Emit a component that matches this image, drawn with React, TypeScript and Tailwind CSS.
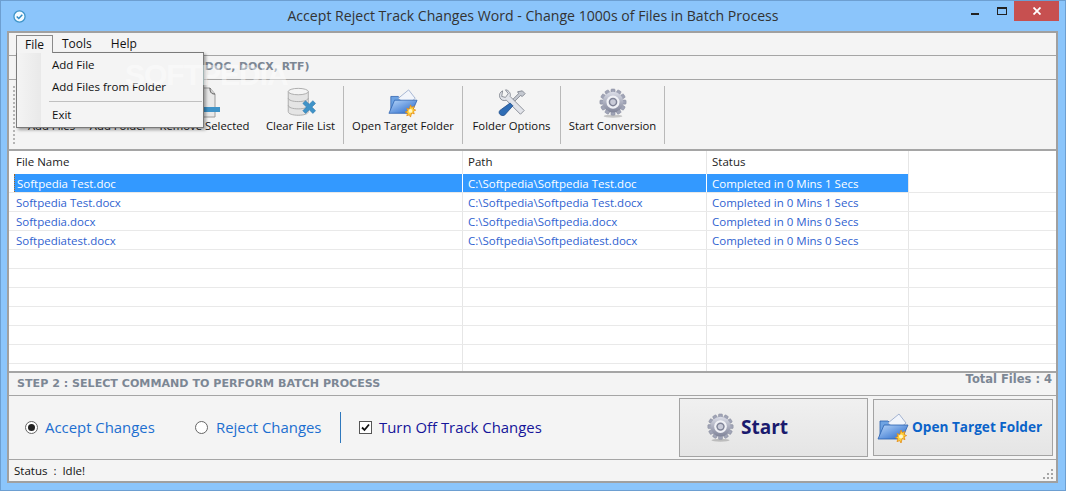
import React from "react";

const ui = "font-['Open_Sans','Noto_Sans',sans-serif]";

const files = [
  ["Softpedia Test.doc", "C:\\Softpedia\\Softpedia Test.doc", "Completed in 0 Mins 1 Secs"],
  ["Softpedia Test.docx", "C:\\Softpedia\\Softpedia Test.docx", "Completed in 0 Mins 1 Secs"],
  ["Softpedia.docx", "C:\\Softpedia\\Softpedia.docx", "Completed in 0 Mins 0 Secs"],
  ["Softpediatest.docx", "C:\\Softpedia\\Softpediatest.docx", "Completed in 0 Mins 0 Secs"],
  ["", "", ""],
  ["", "", ""],
  ["", "", ""],
  ["", "", ""],
  ["", "", ""],
  ["", "", ""],
  ["", "", ""],
];

function Gear({ size = 30 }: { size?: number }) {
  const teeth = Array.from({ length: 12 }, (_, i) => i * 30);
  return (
    <svg width={size} height={size} viewBox="0 0 32 32">
      <defs>
        <linearGradient id="gearFill" x1="0" y1="0" x2="0" y2="1">
          <stop offset="0" stopColor="#dcdee8" />
          <stop offset="1" stopColor="#7f8398" />
        </linearGradient>
      </defs>
      <ellipse cx="16" cy="30" rx="10" ry="1.6" fill="#00000030" />
      {teeth.map((a) => (
        <rect key={a} x="13.800" y="1" width="4.400" height="6" rx="1" fill="#a0a4b6" stroke="#83879a" strokeWidth="0.5" transform={`rotate(${a} 16 15)`} />
      ))}
      <circle cx="16" cy="15" r="11" fill="url(#gearFill)" />
      <circle cx="16" cy="15" r="7" fill="#f0f1f6" />
      <circle cx="16" cy="15" r="4.600" fill="#7e8296" />
      <circle cx="16" cy="15" r="3" fill="#c9cbd8" />
    </svg>
  );
}

function FolderIcon({ size = 30 }: { size?: number }) {
  return (
    <svg width={size} height={size} viewBox="0 0 32 32">
      <defs>
        <linearGradient id="folderFill" x1="0" y1="0" x2="1" y2="1">
          <stop offset="0" stopColor="#b9d7f9" />
          <stop offset="1" stopColor="#1f63c9" />
        </linearGradient>
      </defs>
      <path d="M3 9h8l2 2h3v14H3z" fill="#6ea3e2" stroke="#2a5fae" strokeWidth="0.8" />
      <path d="M11 11 22 2l7 9-9 8z" fill="#f2f5fb" stroke="#8fa3c8" strokeWidth="0.8" />
      <path d="M7 13h24l-6 14H1z" fill="url(#folderFill)" stroke="#2a5fae" strokeWidth="0.8" />
      <path d="M24 18l1.2 2.6 2.8-1-1 2.8 2.6 1.2-2.6 1.2 1 2.8-2.8-1L24 31l-1.2-2.400-2.800 1 1-2.800-2.600-1.200 2.600-1.200-1-2.800 2.800 1z" fill="#ffd23c" stroke="#e58a12" strokeWidth="0.8" />
      <circle cx="24" cy="24.500" r="2" fill="#fff6c8" />
    </svg>
  );
}

function ToolsIcon() {
  return (
    <svg width="30" height="30" viewBox="0 0 32 32">
      <path d="M27 3l3 3-3 3-2-1-7 7-2-2 7-7-1-2z" fill="#c4c8d0" stroke="#6f747f" strokeWidth="0.8" />
      <path d="M6 3a6 6 0 0 0-3 7c1 3 4 4 7 3l15 15 4-4L14 9c1-3-1-6-4-7l-1 0 3 4-3 4-4-1z" fill="#e2e4ea" stroke="#6f747f" strokeWidth="0.8" />
      <path d="M14 16l3 3-9 10c-2 1-4 0-5-1s-1-3 0-4z" fill="#2f6db5" stroke="#1d4a85" strokeWidth="0.8" />
    </svg>
  );
}

function ClearListIcon() {
  return (
    <svg width="30" height="31" viewBox="0 0 32 34">
      <path d="M2 5v22c0 2.500 5 4 11 4s11-1.500 11-4V5z" fill="#e4e4e4" stroke="#a8a8a8" />
      <ellipse cx="13" cy="5" rx="11" ry="3.500" fill="#f4f4f4" stroke="#a8a8a8" />
      <path d="M2 12c0 2.500 5 4 11 4s11-1.500 11-4M2 20c0 2.500 5 4 11 4s11-1.500 11-4" fill="none" stroke="#a8a8a8" />
      <path d="M18 18l3-3 4 4 4-4 3 3-4 4 4 4-3 3-4-4-4 4-3-3 4-4z" fill="#3f93c8" stroke="#2c76a8" strokeWidth="0.6" />
    </svg>
  );
}

function RemoveIcon() {
  return (
    <svg width="30" height="31" viewBox="0 0 30 31">
      <path d="M4 1h16l5 6v23H4z" fill="#e9e9e9" stroke="#9a9a9a" />
      <path d="M20 1c0 4 1 6 5 6" fill="#cfcfcf" stroke="#555" />
      <rect x="3" y="20" width="27" height="5" fill="#3f93c8" />
    </svg>
  );
}

function ToolButton({ label, w, icon, sep = true }: { label: string; w: string; icon?: React.ReactNode; sep?: boolean }) {
  return (
    <>
      <div className={`${w} flex flex-col items-center h-[60px] shrink-0`}>
        <div className="h-[33px] flex items-end justify-center">{icon}</div>
        <div className="text-[11.3px] leading-[16px] text-[#111] whitespace-nowrap">{label}</div>
      </div>
      {sep && <div className="w-px h-[58px] bg-[#b9b9b9] shrink-0" />}
    </>
  );
}

export default function App() {
  return (
    <div className={`${ui} w-[1066px] h-[491px] bg-[#8bc5fb] border border-[#6d9fd1] flex flex-col overflow-hidden relative`}>
      {/* title bar */}
      <div className="h-[30px] shrink-0 flex items-center">
        <div className="w-[120px] h-full flex items-center">
          <svg className="ml-[12px]" width="13" height="13" viewBox="0 0 14 14">
            <circle cx="7" cy="7" r="6" fill="#f4fbff" stroke="#3d94c9" strokeWidth="1.4" />
            <path d="M4 7l2.200 2.200L10 5" fill="none" stroke="#2f8ac4" strokeWidth="1.600" />
          </svg>
        </div>
        <div className="flex-1 text-center text-[14.1px] text-[#333] whitespace-nowrap">
          Accept Reject Track Changes Word - Change 1000s of Files in Batch Process
        </div>
        <div className="w-[120px] flex items-start justify-end self-start">
          <div className="w-[8px] h-[2px] mt-[12px] bg-[#222]" />
          <div className="w-[8px] h-[5px] mt-[6px] ml-[18px] border border-[#222] border-t-2 mr-[7px] box-content" />
          <div className="w-[45px] h-[20px] bg-[#c75050] flex items-center justify-center mr-[6px]">
            <svg width="8" height="8" viewBox="0 0 8 8">
              <path d="M0.500 0.500l7 7M7.500 0.500l-7 7" stroke="#fff" strokeWidth="1.800" />
            </svg>
          </div>
        </div>
      </div>

      {/* client area */}
      <div className="ml-[6px] mr-[7px] h-[452px] border-2 border-[#a0a0a0] bg-[#f4f4f4] flex flex-col relative">
        {/* menu bar */}
        <div className="h-[23px] shrink-0 flex items-center text-[12px] text-[#111] pl-[7px] border-b border-[#a5a5a5]">
          <span className="w-[36px] text-center">File</span>
          <span className="ml-[10px]">Tools</span>
          <span className="ml-[19px]">Help</span>
        </div>

        {/* step 1 */}
        <div className="h-[24px] shrink-0 flex items-center pl-[8px] text-[10.9px] font-bold text-[#7c8794] font-['DejaVu_Sans',sans-serif] border-b border-[#a5a5a5] whitespace-nowrap">
          STEP 1 : SELECT WORD FILES (DOC, DOCX, RTF)
        </div>

        {/* toolbar */}
        <div className="h-[71px] shrink-0 flex items-center pl-[4px] border-b-2 border-[#a5a5a5]">
          <div className="w-[4px] h-[58px] border-l-2 border-dotted border-[#b5b5b5] shrink-0" />
          <ToolButton label="Add Files" w="w-[69px]" sep={false} />
          <ToolButton label="Add Folder" w="w-[65px]" sep={false} />
          <ToolButton label="Remove Selected" w="w-[107px]" icon={<RemoveIcon />} sep={false} />
          <ToolButton label="Clear File List" w="w-[85px]" icon={<ClearListIcon />} />
          <ToolButton label="Open Target Folder" w="w-[118px]" icon={<FolderIcon />} />
          <ToolButton label="Folder Options" w="w-[97px]" icon={<ToolsIcon />} />
          <ToolButton label="Start Conversion" w="w-[103px]" icon={<Gear />} />
        </div>

        {/* table */}
        <div className="h-[220px] shrink-0 bg-white overflow-hidden text-[11.5px]">
          <div className="h-[23px] flex items-start text-[#222] leading-[21px]">
            <div className="w-[453px] pl-[7px]">File Name</div>
            <div className="w-[244px] pl-[5px] border-l border-[#e6e6e6] h-full">Path</div>
            <div className="w-[202px] pl-[5px] border-l border-[#e6e6e6] h-full">Status</div>
            <div className="w-px h-full bg-[#e6e6e6]" />
          </div>
          {files.map((r, i) => (
            <div key={i} className={`h-[19px] flex items-center w-full border-b border-[#e9e9e9] ${i === 0 ? "text-white" : "text-[#2f62d0]"}`}>
              <div className="w-[5px] h-full shrink-0" />
              <div className={`w-[448px] h-full pl-[2px] leading-[20px] ${i === 0 ? "bg-[#3399ff] border-l border-dotted border-[#a8661c]" : ""}`}>{r[0]}</div>
              <div className={`w-[244px] h-full pl-[5px] leading-[20px] border-l ${i === 0 ? "bg-[#3399ff] border-white" : "border-[#e6e6e6]"}`}>{r[1]}</div>
              <div className={`w-[202px] h-full pl-[5px] leading-[20px] border-l ${i === 0 ? "bg-[#3399ff] border-white" : "border-[#e6e6e6]"}`}>{r[2]}</div>
              <div className="w-px h-full bg-[#e6e6e6]" />
            </div>
          ))}
        </div>

        {/* step 2 */}
        <div className="h-[25px] shrink-0 flex items-start justify-between border-t-2 border-b border-[#a5a5a5] pl-[8px] pr-[4px] text-[11.1px] font-bold text-[#7c8794] font-['DejaVu_Sans',sans-serif]">
          <span className="leading-[22px]">STEP 2 : SELECT COMMAND TO PERFORM BATCH PROCESS</span>
          <span className="leading-[13px] text-[11.500px]">Total Files : 4</span>
        </div>

        {/* commands */}
        <div className="h-[64px] shrink-0 flex items-center pl-[16px] border-b border-[#a5a5a5]">
          <span className="w-[13px] h-[13px] rounded-full border border-[#666] bg-white flex items-center justify-center shrink-0">
            <span className="w-[7px] h-[7px] rounded-full bg-[#222]" />
          </span>
          <span className="ml-[7px] w-[150px] text-[14.9px] text-[#1d6fd0]">Accept Changes</span>
          <span className="w-[13px] h-[13px] rounded-full border border-[#666] bg-white shrink-0" />
          <span className="ml-[8px] w-[124px] text-[14.9px] text-[#1d6fd0] whitespace-nowrap">Reject Changes</span>
          <div className="w-px h-[31px] bg-[#2f78bd] shrink-0" />
          <span className="ml-[18px] w-[13px] h-[13px] border border-[#555] bg-white flex items-center justify-center shrink-0">
            <svg width="11" height="11" viewBox="0 0 11 11">
              <path d="M2 5.500l2.500 2.500L9 2.500" fill="none" stroke="#111" strokeWidth="1.800" />
            </svg>
          </span>
          <span className="ml-[7px] w-[300px] text-[14.9px] text-[#15159a] whitespace-nowrap">Turn Off Track Changes</span>
          <button className="w-[189px] h-[59px] shrink-0 border border-[#a3a3a3] bg-gradient-to-b from-[#f0f0f0] to-[#e5e5e5] flex items-center pl-[26px] gap-[6px]">
            <Gear size={29} />
            <span className="text-[19px] font-bold text-[#1a1a6e]">Start</span>
          </button>
          <button className="ml-[5px] w-[180px] h-[57px] shrink-0 border border-[#a3a3a3] bg-gradient-to-b from-[#f0f0f0] to-[#e5e5e5] flex items-center pl-[3px] gap-[3px]">
            <FolderIcon size={32} />
            <span className="text-[13.6px] font-bold text-[#0a63c9] whitespace-nowrap">Open Target Folder</span>
          </button>
        </div>

        {/* status */}
        <div className="h-[21px] shrink-0 flex items-center justify-between pl-[5px] pr-[2px] text-[11.5px] text-[#111]">
          <span className="whitespace-pre">Status  :  Idle!</span>
          <svg className="self-end mb-[2px]" width="11" height="11" viewBox="0 0 11 11">
            <path d="M8 1h2v2H8zM4 5h2v2H4zM8 5h2v2H8zM0 9h2v2H0zM4 9h2v2H4zM8 9h2v2H8z" fill="#a5a5a5" />
          </svg>
        </div>

        {/* open File menu */}
        <div className="absolute left-[7px] top-[2px] w-[37px] h-[18px] border border-b-0 border-[#8a8a8a] bg-[#f4f4f4] text-[12px] text-center leading-[17px] text-[#111] z-20">
          File
        </div>
        <div className="absolute left-[7px] top-[19px] w-[188px] h-[76px] border border-[#7a7a7a] bg-[#f4f4f4] shadow-[2px_2px_3px_rgba(0,0,0,0.35)] text-[11.5px] text-[#111] z-10">
          <div className="absolute left-0 top-0 bottom-0 w-[24px] bg-gradient-to-r from-[#f4f4f4] to-[#e9e9e9]" />
          <div className="relative pl-[35px] pt-px">
            <div className="h-[22px] leading-[22px]">Add File</div>
            <div className="h-[22px] leading-[22px]">Add Files from Folder</div>
            <div className="h-px bg-[#c0c0c0] ml-[-3px] mr-px mt-[3px]" />
            <div className="h-[22px] leading-[22px] mt-[2px]">Exit</div>
          </div>
        </div>

        {/* watermark */}
        <div className="absolute left-[116px] top-[27px] text-[30px] leading-[30px] tracking-[-1px] font-bold text-white/45 font-['Liberation_Sans',sans-serif] pointer-events-none z-30">
          SOFTPEDIA
        </div>
      </div>
    </div>
  );
}
